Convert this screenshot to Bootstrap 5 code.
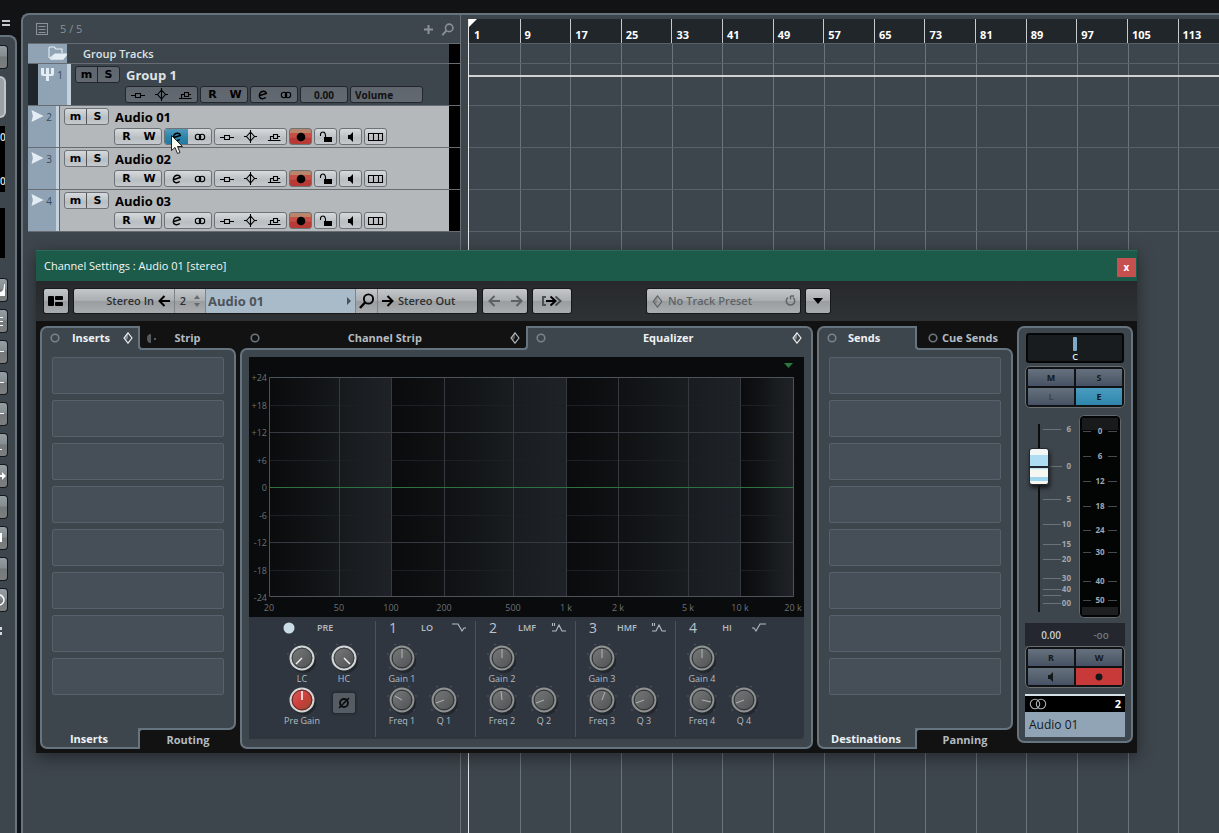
<!DOCTYPE html>
<html lang="en" data-bs-theme="dark">
<head>
<meta charset="utf-8">
<meta name="viewport" content="width=device-width, initial-scale=1">
<title>Channel Settings</title>
<link rel="stylesheet" href="https://cdn.jsdelivr.net/npm/bootstrap@5.3.0/dist/css/bootstrap.min.css">
<style>
:root{--panel:#3e464d;--edge:#667480;--line:#666c71;--track:#8fa3b5;--ink:#121314}
body{font-family:"Open Sans","Noto Sans",sans-serif;font-size:11px;line-height:14px;background:var(--ink);color:#dfe3e6;height:100vh;overflow:hidden}
button,input{font:inherit;color:inherit}
button{padding:0;border:0;background:none;display:inline-flex;align-items:center;justify-content:center}
svg{display:block;flex:none}
.ico{fill:none;stroke:currentColor;stroke-width:1.1}
.topbar{height:13px}
/* left inspector, mostly outside the view */
.inspector{width:17px;background:var(--panel);border-top:2px solid var(--edge);border-right:2px solid var(--edge);border-radius:0 8px 0 0;margin-top:4px;padding-top:8px}
.menu-mark{height:18px;width:17px;padding:6px 0 0 2px}
.side-btn{width:8px;height:24px;border:1px solid #16191c;border-left:0;border-radius:0 4px 4px 0;background:linear-gradient(#959fa3,#858d91 45%,#74787a 50%,#7d7f7f);color:#fff;overflow:hidden;justify-content:start;margin-bottom:7px}
.side-pill{width:6px;height:42px;background:#9ba2a6;border:2px solid #c0c5c8;border-left:0;border-radius:0 6px 6px 0}
.side-lcd{width:5px;background:#000;font-size:10px;color:#dce9ef;overflow:hidden;font-weight:600}
.side-stack{padding-top:20px}
/* project */
.project{background:var(--panel);border-top:2px solid var(--edge);border-left:2px solid var(--edge);border-radius:8px 0 0 0;margin-left:4px;padding-left:5px;min-width:0}
.tracklist{width:433px;border-right:1px solid #6a7074}
.list-head{height:29px;border-bottom:1px solid var(--line);color:#8b9196;padding:0 5px 0 8px}
.trk{border-bottom:1px solid var(--line);height:42px}
.trk.folder{height:20px}
.chip{background:var(--track);color:#e4edf3;flex:none}
.chip-num{color:#3b4957;font-size:10px;padding-left:3px}
.strip{width:4px;background:#c3d2de;flex:none}
.vu{width:11px;background:#000;flex:none}
.lit{background:#b4b8bb;color:#000}
.lit .strip{border-right:1px solid #5d6468}
.nm{font-size:13px;line-height:18px;font-weight:700;height:17px}
.nmrow{gap:6px}
.grp{height:17px;border:1px solid #6d7276;border-radius:3px;outline:0;background:linear-gradient(#d6dadd,#b9bec2 60%,#c6cace);color:#000;flex:none;display:flex;overflow:hidden}
.grp>*{flex:1;height:15px;min-width:0}
.grp.ms>*+*{border-left:1px solid #555}
.w45{width:45px}.w48{width:48px}.w73{width:73px}.w23{width:23px}
.gl{font-family:"DejaVu Sans",sans-serif;font-weight:700;font-size:11px;line-height:14px}
.dim .grp{border-color:#22272c;background:linear-gradient(#5f666e,#626971)}
.dim .grp>*{border-color:#22272c}
.dim .val{font-size:10px;font-weight:700;color:#111}
.on-blue{background:linear-gradient(#5599bb,#2e86ad 50%,#2479a0)}
.grp.rec{background:linear-gradient(#b9866b 25%,#c65048 30%,#c65048 55%,#b83a36 60%)}
/* timeline */
.timeline{margin-left:7px;margin-top:4px;border-left:1px solid #e4e6e7;min-width:0;overflow:hidden}
.ruler{height:24px;background:#21262b}
.ruler span,.bars span{flex:5 0 0;min-width:0;border-left:1px solid #c8cbcd;font-size:11px;font-weight:700;color:#fff;padding:9px 0 0 4px;line-height:14px}
.ruler span:last-child,.bars span:last-child{flex-grow:4}
.ruler span:first-child,.bars span:first-child{border-left-color:transparent}
.bars span{border-left-color:#6b757d;padding:0}
.lane{height:42px;border-bottom:1px solid #59626a}
.lane.first{height:21px;border-top:1px solid #59626a}
.auto{height:2px;background:#cfd1d2;margin-top:11px}
/* channel window */
.chan-win{left:36px;right:82px;top:250px;background:#121212;box-shadow:0 4px 16px rgba(0,0,0,.45)}
.titlebar{height:31px;background:#1c5b4a;border-top:1px solid #2a6c59;padding:0 1px 0 8px;font-size:11px;color:#f4f7f6}
.close-x{width:19px;height:19px;background:#c6504f;color:#fff;font-weight:700;font-size:10px;line-height:12px;margin-top:2px}
.tools{height:40px;background:linear-gradient(#27292b,#2e3235);padding:0 8px;gap:6px}
.tb{height:24px;border-radius:2px;background:linear-gradient(#c4c7ca,#abafb2 48%,#9a9ea1 52%,#a9adb0);box-shadow:0 0 0 1px #16181a;color:#2c3033;font-weight:600;font-size:11px;display:flex;align-items:center;overflow:hidden}
.tb>button,.tb>label{height:24px}
.tb>*+*{border-left:1px solid #7e8386}
.w24{width:24px}.w38{width:38px}.w44{width:44px}.w100{width:100px}
.chain{width:403px}
.chan-name{background:#a9bac9;color:#4d5359;font-size:13px;padding-left:2px}
.chan-name input{background:none;border:0;width:130px;padding:0;font-weight:700;outline:0}
.preset{width:153px;color:#5f6467}
.pnl-row{padding:5px 4px 4px;gap:4px}
.pnl{width:196px;flex:none}
.tabline{height:24px;display:flex;position:relative;z-index:1}
.tabline.up{margin-bottom:-2px}
.tabline.down{margin-top:-2px;height:21px}
.tabb{font-weight:700;font-size:11px;color:#b4bbc0;flex:none}
.tabb.act{background:var(--panel);color:#eef2f4}
.up .act{padding-bottom:2px}.down .act{padding-top:2px}.up .off{padding-top:2px}
.side .act{width:106px;padding-right:8px}
.side .off{width:90px;margin-left:-8px;background:#121212;padding-left:4px}
.side.up .act{border:solid var(--edge);border-width:2px 0 0 2px;border-radius:7px 0 0 0}
.side.up .off{border:solid var(--edge);border-width:0 0 2px 2px;border-radius:0 0 0 4px}
.side.down .act{border:solid var(--edge);border-width:0 2px 2px;border-radius:0 0 0 7px;width:100px;padding-right:2px}
.side.down .off{border:solid var(--edge);border-width:2px 0 0 2px;border-radius:4px 0 0 0;margin-left:-2px;padding-left:8px}
.mid .off{flex:1 1 0;margin-left:8px;background:#121212;border:solid var(--edge);border-width:0 2px 2px 0;border-radius:0 0 4px 0;padding-left:2px;position:relative;z-index:1}
.mid .act{flex:1 1 0;margin-left:-8px;padding-left:16px;border:solid var(--edge);border-width:2px 2px 0 0;border-radius:0 7px 0 0}
.box{background:var(--panel);border:2px solid var(--edge);border-radius:0 7px 7px 0}
.side-box{padding:7px 10px 0;height:382px;display:flex;flex-direction:column;gap:6px}
.mid-box{border-radius:7px 0 7px 7px;padding:7px 7px 8px}
.slot{height:37px;width:100%;background:#464e57;border:1px solid #56616b;border-radius:2px;flex:none}
.eq-txt{font-size:9px;fill:#6b7278}
.eq-ctl{background:#2f363f;height:122px;padding-top:4px;color:#b4bcc3;border-radius:0 0 4px 0}
.band{width:100px;padding-left:5px;border-left:1px solid #4a525b;height:116px;flex:none}
.band.pre{width:126px;padding-left:32px;border:0}
.band-head{height:14px;width:86px}
.band-no{font-size:14px;width:14px;line-height:14px;color:#b9c4cf}
.band-head .ttl{font-size:9px;font-weight:600;line-height:14px}
.knobs{display:grid;grid-template-columns:42px 42px;padding-top:8px}
.knob{flex-direction:column;width:42px;height:42px;font-size:9px;line-height:12px;white-space:nowrap}
.phase{width:22px;height:20px;background:#555c63;border-radius:2px;box-shadow:0 0 3px 1px #20252b;color:#0c0d0f}
/* channel strip */
.fcol{width:116px;flex:none;border-radius:7px;padding:5px 6px 4px;margin-bottom:2px;font-weight:600;font-size:9px}
.pan{height:30px;background:#181c1f;border:2px solid #050607;border-radius:3px;color:#dfe9f0;padding-top:2px;line-height:9px;margin:0 1px 3px;width:98px}
.quad{display:grid;grid-template-columns:1fr 1fr;gap:2px;background:#101214;border:1px solid #6a7074;border-radius:5px;padding:2px;color:#15181b}
.quad button{height:17px;background:linear-gradient(#65717f,#545f6d 60%,#465166);font-weight:700}
.quad .blue{background:linear-gradient(#4a9cc0,#2f86ac)}
.quad .red{background:#c83a3a}
.fad{height:204px;margin-top:7px}
.fad-box{left:4px;top:9px;width:20px;height:188px}
.fad-box input{position:absolute;width:188px;height:20px;left:-84px;top:84px;margin:0;transform:rotate(-90deg);appearance:none;-webkit-appearance:none;background:linear-gradient(#0000 9px,#0b0c0d 9px,#0b0c0d 11px,#0000 11px)}
.fad-box input::-webkit-slider-thumb{-webkit-appearance:none;width:37px;height:20px;border:1px solid #23282c;border-radius:3px;box-shadow:-3px 1px 4px #15181b;background:linear-gradient(90deg,#f7f7f1 3px,#9fd4ef 3px,#9fd4ef 7px,#f7f7f1 7px,#f7f7f1 14px,#aedcf3 16px,#20262b 16px,#20262b 18px,#aedcf3 18px,#aedcf3 29px,#f2f6f5 29px)}
.sc{font-size:8px;font-weight:700;fill:#a1a7ac}
.read{height:23px;background:#24272d;font-size:10px;color:#c7cdd2}
.plate{border-top:2px solid #d4e0e8;margin-top:6px}
.plate .top{height:16px;background:#000;color:#fff;font-size:11px;font-weight:700;padding:0 4px}
.plate .bot{height:25px;background:#90a4b6;color:#15191d;font-weight:400;font-size:12px;padding-left:4px}
.ptr{left:171px;top:135px;z-index:3}
</style>
<script src="https://cdn.jsdelivr.net/npm/bootstrap@5.3.0/dist/js/bootstrap.bundle.min.js" defer></script>
</head>
<body class="d-flex flex-column position-relative">
<svg width="0" height="0" class="position-absolute" aria-hidden="true">
<defs>
<linearGradient id="kg" x2="1" y2="1"><stop stop-color="#7a7c7c"/><stop offset="1" stop-color="#4c4f51"/></linearGradient>
<linearGradient id="kr" x2="1" y2="1"><stop stop-color="#d9605c"/><stop offset=".5" stop-color="#cb3f3c"/><stop offset="1" stop-color="#8c4a2a"/></linearGradient>
<linearGradient id="dec"><stop stop-color="#0a0b0d"/><stop offset=".35" stop-color="#101214"/><stop offset=".65" stop-color="#181c1f"/><stop offset="1" stop-color="#1f2228"/></linearGradient>
</defs>
<symbol id="i-ins" viewBox="0 0 14 12"><path d="M0 6.500h4.500M9.500 6.500H14M4.500 4.500h5v4h-5z"/></symbol>
<symbol id="i-eq" viewBox="0 0 13 13"><path d="M6.500 0v13M2.500 6.500l4-4.500 4 4.500-4 4.500zM0 6.500h2.500M10.500 6.500H13"/></symbol>
<symbol id="i-snd" viewBox="0 0 14 12"><path d="M1 9.500h12.500M3.500 9.500v-4h2.500M6.500 3.500h4v4h-4zM10.500 5.500H13"/></symbol>
<symbol id="i-e" viewBox="0 0 12 12"><path stroke-width="1.500" d="M2 6.700 9.300 4.500C9 2.600 6.800 1.800 5 2.500 2.900 3.400 1.900 6 2.600 8.100c.7 2 3.800 2.300 6.200.4"/></symbol>
<symbol id="i-oo" viewBox="0 0 12 12"><circle cx="4" cy="6" r="2.700"/><circle cx="8" cy="6" r="2.700"/></symbol>
<symbol id="i-rec" viewBox="0 0 10 10"><circle cx="5" cy="5" r="4.300" fill="currentColor" stroke="none"/></symbol>
<symbol id="i-lock" viewBox="0 0 14 12"><path d="M1.500 5V3Q2 1 4 1t2.500 3v3"/><path d="M5 6h8v5H5z" fill="currentColor" stroke="none"/></symbol>
<symbol id="i-spk" viewBox="0 0 8 10"><path d="M1 3h2l3-3v10L3 7H1z" fill="currentColor" stroke="none"/></symbol>
<symbol id="i-lane" viewBox="0 0 16 10"><path d="M.500 1.500h14v7H.500zM5.500 1.500v7M10.500 1.500v7"/></symbol>
<symbol id="i-aud" viewBox="0 0 14 14"><path d="M0 0 13 6.500 0 13 1.500 6.500z" fill="currentColor" stroke="none"/></symbol>
<symbol id="i-dia" viewBox="0 0 12 12"><path d="M6 .8 10 6 6 11.200 2 6z"/><path d="M6 .8 2 6l2 2.600L6 6z" fill="currentColor" fill-opacity=".4" stroke="none"/></symbol>
<symbol id="i-ring" viewBox="0 0 10 10"><circle cx="5" cy="5" r="3.800" stroke-width="1.600"/></symbol>
<symbol id="i-mag" viewBox="0 0 16 16"><circle cx="9.500" cy="6" r="4.600" stroke-width="1.900"/><path d="M6 9.500 1 15" stroke-width="2.400"/></symbol>
<symbol id="i-l" viewBox="0 0 12 12"><path stroke-width="2" d="M12 6H1.500M6.500 1l-5 5 5 5"/></symbol>
<symbol id="i-r" viewBox="0 0 12 12"><path stroke-width="2" d="M0 6h10.500M5.500 1l5 5-5 5"/></symbol>
<symbol id="k" viewBox="0 0 30 30"><g fill="#58616a"><circle cx="8" cy="1.500" r=".8"/><circle cx="22" cy="1.500" r=".8"/><circle cx="1" cy="11" r=".8"/><circle cx="29" cy="11" r=".8"/><circle cx="3" cy="25" r=".8"/><circle cx="27" cy="25" r=".8"/></g><circle cx="17" cy="18" r="12" fill="#1c2127" opacity=".7" stroke="none"/><circle cx="15" cy="15" r="11.500" fill="url(#kg)" stroke="#8f9291" stroke-width="1.800"/><circle cx="15" cy="15" r="9.800" stroke="#2e3133" stroke-width="1"/></symbol>
<symbol id="kw" viewBox="0 0 30 30"><g fill="#58616a"><circle cx="8" cy="1.500" r=".8"/><circle cx="22" cy="1.500" r=".8"/><circle cx="1" cy="11" r=".8"/><circle cx="29" cy="11" r=".8"/></g><circle cx="17" cy="18" r="12" fill="#1c2127" opacity=".7" stroke="none"/><circle cx="15" cy="15" r="11.500" fill="url(#kg)" stroke="#d3d6d6" stroke-width="2"/><circle cx="15" cy="15" r="9.800" stroke="#3c4042"/></symbol>
<symbol id="krd" viewBox="0 0 30 30"><circle cx="17" cy="18" r="12" fill="#1c2127" opacity=".7" stroke="none"/><circle cx="15" cy="15" r="11.500" fill="url(#kr)" stroke="#d3d6d6" stroke-width="2"/><circle cx="15" cy="15" r="9.800" stroke="#5c2c2a"/></symbol>
</svg>

<div class="topbar flex-shrink-0"></div>
<div class="d-flex flex-grow-1" style="min-height:0">
  <aside class="d-flex flex-column flex-shrink-0">
    <div class="menu-mark"><svg width="8" height="8" fill="#c5c8ca"><path d="M0 1h8v2H0zM0 5h8v2H0z"/></svg></div>
    <div class="inspector flex-grow-1">
      <button class="side-btn d-block" aria-label="Quick controls"></button>
      <div class="side-pill"></div>
      <div class="side-lcd mt-2 mb-2 py-1 d-flex flex-column justify-content-between" style="height:66px"><span>0</span><span>0</span></div>
      <div class="side-lcd mt-3" style="height:50px"></div>
      <div class="side-stack d-flex flex-column">
      <button class="side-btn" aria-label="Note"><svg width="7" height="12" fill="#fff"><path d="M0 8Q4 8 4 0h1v12H0z"/></svg></button>
      <button class="side-btn" aria-label="List"><svg width="7" height="12" stroke="#fff"><path d="M0 2.500h3M0 6.500h3M0 10.500h3"/></svg></button>
      <button class="side-btn" aria-label="Inserts"><svg width="7" height="12" stroke="#fff"><path d="M0 5.500h4"/></svg></button>
      <button class="side-btn" aria-label="Equalizer"><svg width="7" height="12" stroke="#fff"><path d="M0 5.500h4"/></svg></button>
      <button class="side-btn" aria-label="Sends"><svg width="7" height="12" stroke="#fff"><path d="M0 5.500h4"/></svg></button>
      <button class="side-btn" aria-label="Cue"><svg width="7" height="12" stroke="#fff"><path d="M0 10.500h2"/></svg></button>
      <button class="side-btn" aria-label="Route"><svg width="7" height="12" fill="#fff"><path d="M0 5h2V2l4 4-4 4V7H0z"/></svg></button>
      <button class="side-btn" aria-label="Strip"></button>
      <button class="side-btn" aria-label="Fader"><svg width="7" height="12" fill="#fff"><path d="M0 1h2v9H0z"/></svg></button>
      <button class="side-btn" aria-label="Notes"></button>
      <button class="side-btn" aria-label="Loop"><svg width="7" height="14" fill="none" stroke="#fff" stroke-width="1.500"><circle cx="-1" cy="7" r="5"/></svg></button>
      <svg class="mt-2" width="3" height="8" fill="#d5d9db"><path d="M0 0h2v3H0zM0 5h2v3H0z"/></svg>
      </div>
    </div>
  </aside>

  <main class="project d-flex flex-grow-1">
    <section class="tracklist flex-shrink-0" aria-label="Tracks">
      <div class="list-head d-flex align-items-center">
        <svg width="12" height="12" class="ico"><path d="M.500.500h11v11H.500zM2.500 3.500h7M2.500 6.500h7M2.500 9.500h7"/></svg>
        <span class="ms-2 me-auto ps-1">5 / 5</span>
        <button aria-label="Add track"><svg width="9" height="9" stroke="currentColor" stroke-width="2"><path d="M4.500 0v9M0 4.500h9"/></svg></button>
        <button class="ms-2" aria-label="Find track"><svg width="14" height="13" class="ico"><use href="#i-mag"/></svg></button>
      </div>

      <div class="trk folder d-flex">
        <div class="chip d-flex justify-content-end" style="width:39px"><svg width="20" height="17" viewBox="0 0 20 17" class="ico"><path d="M2 14V4q0-1 1-1h4l2 2h6v4M3 14l5-4h12l-4 5H4z"/><path d="M8 10.500h11L16 15H4z" fill="currentColor"/></svg></div>
        <div class="flex-grow-1 align-self-center fw-semibold ps-3 lh-1">Group Tracks</div>
        <div class="vu"></div>
      </div>

      <div class="trk dim d-flex">
        <div style="width:10px;background:#20242b"></div>
        <div class="chip chip-num d-flex justify-content-between pe-1 pt-1" style="width:29px"><svg width="13" height="14" fill="#e4edf3"><path d="M0 0h3v6h2V0h3v6h2V0h3v6q0 2-2 2H8v5H5V8H2Q0 8 0 6z"/></svg><span>1</span></div>
        <div class="strip"></div>
        <div class="d-flex flex-column flex-grow-1 ps-1" style="gap:3px;padding-top:2px">
          <div class="d-flex nmrow"><div class="grp ms w45 gl"><button>m</button><button>S</button></div><span class="nm">Group 1</span></div>
          <div class="d-flex" style="gap:2px;margin-left:50px">
            <div class="grp w73"><button aria-label="Inserts"><svg width="14" height="12" class="ico"><use href="#i-ins"/></svg></button><button aria-label="EQ"><svg width="13" height="13" class="ico"><use href="#i-eq"/></svg></button><button aria-label="Sends"><svg width="14" height="12" class="ico"><use href="#i-snd"/></svg></button></div>
            <div class="grp w48 gl"><button>R</button><button>W</button></div>
            <div class="grp w48"><button aria-label="Edit"><svg width="12" height="12" class="ico"><use href="#i-e"/></svg></button><button aria-label="Stereo"><svg width="12" height="12" class="ico"><use href="#i-oo"/></svg></button></div>
            <div class="grp w48"><button class="val">0.00</button></div>
            <div class="grp w73"><button class="val justify-content-start ps-1">Volume</button></div>
          </div>
        </div>
        <div class="vu"></div>
      </div>

      <div class="trk lit d-flex">
        <div class="chip chip-num d-flex justify-content-between pe-1 pt-1" style="width:28px"><svg width="14" height="13" color="#e4edf3"><use href="#i-aud"/></svg><span>2</span></div>
        <div class="strip"></div>
        <div class="d-flex flex-column flex-grow-1 ps-1" style="gap:3px;padding-top:2px">
          <div class="d-flex nmrow"><div class="grp ms w45 gl"><button>m</button><button>S</button></div><span class="nm">Audio 01</span></div>
          <div class="d-flex" style="gap:2px;margin-left:50px">
            <div class="grp w48 gl"><button>R</button><button>W</button></div>
            <div class="grp w48"><button class="on-blue" aria-label="Edit"><svg width="12" height="12" class="ico"><use href="#i-e"/></svg></button><button aria-label="Stereo"><svg width="12" height="12" class="ico"><use href="#i-oo"/></svg></button></div>
            <div class="grp w73"><button aria-label="Inserts"><svg width="14" height="12" class="ico"><use href="#i-ins"/></svg></button><button aria-label="EQ"><svg width="13" height="13" class="ico"><use href="#i-eq"/></svg></button><button aria-label="Sends"><svg width="14" height="12" class="ico"><use href="#i-snd"/></svg></button></div>
            <div class="grp rec w23"><button aria-label="Record"><svg width="10" height="10"><use href="#i-rec"/></svg></button></div>
            <div class="grp w23"><button aria-label="Lock"><svg width="14" height="12" class="ico"><use href="#i-lock"/></svg></button></div>
            <div class="grp w23"><button aria-label="Monitor"><svg width="8" height="10"><use href="#i-spk"/></svg></button></div>
            <div class="grp w23"><button aria-label="Lanes"><svg width="16" height="10" class="ico"><use href="#i-lane"/></svg></button></div>
          </div>
        </div>
        <div class="vu"></div>
      </div>

      <div class="trk lit d-flex">
        <div class="chip chip-num d-flex justify-content-between pe-1 pt-1" style="width:28px"><svg width="14" height="13" color="#e4edf3"><use href="#i-aud"/></svg><span>3</span></div>
        <div class="strip"></div>
        <div class="d-flex flex-column flex-grow-1 ps-1" style="gap:3px;padding-top:2px">
          <div class="d-flex nmrow"><div class="grp ms w45 gl"><button>m</button><button>S</button></div><span class="nm">Audio 02</span></div>
          <div class="d-flex" style="gap:2px;margin-left:50px">
            <div class="grp w48 gl"><button>R</button><button>W</button></div>
            <div class="grp w48"><button aria-label="Edit"><svg width="12" height="12" class="ico"><use href="#i-e"/></svg></button><button aria-label="Stereo"><svg width="12" height="12" class="ico"><use href="#i-oo"/></svg></button></div>
            <div class="grp w73"><button aria-label="Inserts"><svg width="14" height="12" class="ico"><use href="#i-ins"/></svg></button><button aria-label="EQ"><svg width="13" height="13" class="ico"><use href="#i-eq"/></svg></button><button aria-label="Sends"><svg width="14" height="12" class="ico"><use href="#i-snd"/></svg></button></div>
            <div class="grp rec w23"><button aria-label="Record"><svg width="10" height="10"><use href="#i-rec"/></svg></button></div>
            <div class="grp w23"><button aria-label="Lock"><svg width="14" height="12" class="ico"><use href="#i-lock"/></svg></button></div>
            <div class="grp w23"><button aria-label="Monitor"><svg width="8" height="10"><use href="#i-spk"/></svg></button></div>
            <div class="grp w23"><button aria-label="Lanes"><svg width="16" height="10" class="ico"><use href="#i-lane"/></svg></button></div>
          </div>
        </div>
        <div class="vu"></div>
      </div>

      <div class="trk lit d-flex">
        <div class="chip chip-num d-flex justify-content-between pe-1 pt-1" style="width:28px"><svg width="14" height="13" color="#e4edf3"><use href="#i-aud"/></svg><span>4</span></div>
        <div class="strip"></div>
        <div class="d-flex flex-column flex-grow-1 ps-1" style="gap:3px;padding-top:2px">
          <div class="d-flex nmrow"><div class="grp ms w45 gl"><button>m</button><button>S</button></div><span class="nm">Audio 03</span></div>
          <div class="d-flex" style="gap:2px;margin-left:50px">
            <div class="grp w48 gl"><button>R</button><button>W</button></div>
            <div class="grp w48"><button aria-label="Edit"><svg width="12" height="12" class="ico"><use href="#i-e"/></svg></button><button aria-label="Stereo"><svg width="12" height="12" class="ico"><use href="#i-oo"/></svg></button></div>
            <div class="grp w73"><button aria-label="Inserts"><svg width="14" height="12" class="ico"><use href="#i-ins"/></svg></button><button aria-label="EQ"><svg width="13" height="13" class="ico"><use href="#i-eq"/></svg></button><button aria-label="Sends"><svg width="14" height="12" class="ico"><use href="#i-snd"/></svg></button></div>
            <div class="grp rec w23"><button aria-label="Record"><svg width="10" height="10"><use href="#i-rec"/></svg></button></div>
            <div class="grp w23"><button aria-label="Lock"><svg width="14" height="12" class="ico"><use href="#i-lock"/></svg></button></div>
            <div class="grp w23"><button aria-label="Monitor"><svg width="8" height="10"><use href="#i-spk"/></svg></button></div>
            <div class="grp w23"><button aria-label="Lanes"><svg width="16" height="10" class="ico"><use href="#i-lane"/></svg></button></div>
          </div>
        </div>
        <div class="vu"></div>
      </div>
    </section>

    <section class="timeline flex-grow-1 position-relative" aria-label="Timeline">
      <div class="bars d-flex position-absolute top-0 bottom-0 start-0 end-0"><span></span><span></span><span></span><span></span><span></span><span></span><span></span><span></span><span></span><span></span><span></span><span></span><span></span><span></span><span></span></div>
      <div class="position-relative">
        <div class="ruler d-flex"><span>1</span><span>9</span><span>17</span><span>25</span><span>33</span><span>41</span><span>49</span><span>57</span><span>65</span><span>73</span><span>81</span><span>89</span><span>97</span><span>105</span><span>113</span></div>
        <svg class="position-absolute top-0 start-0" width="8" height="8" fill="#fff"><path d="M0 0h8L0 8z"/></svg>
        <div class="lane first"></div>
        <div class="lane d-flow-root overflow-hidden"><div class="auto"></div></div>
        <div class="lane"></div><div class="lane"></div><div class="lane"></div>
      </div>
    </section>
  </main>
</div>

<section class="chan-win position-absolute" aria-label="Channel Settings">
  <header class="titlebar d-flex justify-content-between align-items-center"><span>Channel Settings : Audio 01 [stereo]</span><button class="close-x" aria-label="Close">x</button></header>
  <div class="tools d-flex align-items-center">
    <div class="tb"><button class="w24" aria-label="Layout"><svg width="16" height="10" fill="#000"><rect width="6" height="10" rx="1"/><rect x="7" width="8" height="4" rx="1"/><rect x="7" y="6" width="8" height="4" rx="1"/></svg></button></div>
    <div class="tb chain">
      <button class="w100 justify-content-end pe-1 gap-1">Stereo In <svg width="12" height="12" class="ico text-black"><use href="#i-l"/></svg></button>
      <button style="width:31px" class="gap-2">2<svg width="6" height="12" fill="#666b6e"><path d="M0 4 3 0l3 4zM0 8h6l-3 4z"/></svg></button>
      <label class="chan-name d-flex align-items-center flex-grow-1"><input type="text" value="Audio 01" aria-label="Channel name"><svg class="ms-auto me-1" width="4" height="8" fill="#4a5056"><path d="M0 0l4 4-4 4z"/></svg></label>
      <button style="width:22px" aria-label="Find"><svg width="16" height="16" class="ico text-black"><use href="#i-mag"/></svg></button>
      <button class="w100 justify-content-start ps-1 gap-1"><svg width="12" height="12" class="ico text-black"><use href="#i-r"/></svg>Stereo Out</button>
    </div>
    <div class="tb"><button class="w44" aria-label="Back and forward" style="color:#5d6164;gap:11px"><svg width="12" height="12" class="ico"><use href="#i-l"/></svg><svg width="12" height="12" class="ico"><use href="#i-r"/></svg></button></div>
    <div class="tb"><button class="w38" aria-label="Output chain"><svg width="22" height="12" class="ico"><path stroke="#4b5053" stroke-width="2" d="M5 2H2v8h3M14.500 1.500l5 4.500-5 4.500"/><path stroke="#000" stroke-width="2" d="M5 6h9M9.500 1.500l5 4.500-5 4.500"/></svg></button></div>
    <div class="tb preset" style="margin-left:70px"><button class="w-100 justify-content-start px-1 gap-1"><svg width="13" height="13" class="ico"><use href="#i-dia"/></svg>No Track Preset<svg class="ms-auto" width="11" height="12" fill="none" stroke="currentColor" stroke-width="1.500"><path d="M3 2.500a4.200 4.200 0 1 0 5 0M5.500 1h3.500M5.500 1v3.500"/></svg></button></div>
    <div class="tb"><button class="w24" aria-label="Menu"><svg width="10" height="6" fill="#000"><path d="M0 0h10L5 6z"/></svg></button></div>
  </div>

  <div class="pnl-row d-flex align-items-start">
    <section class="pnl">
      <div class="tabline side up">
        <button class="tabb act justify-content-between" style="padding-left:8px"><svg width="10" height="10" class="ico" color="#77828b"><use href="#i-ring"/></svg>Inserts<svg width="12" height="12" class="ico me-1"><use href="#i-dia"/></svg></button>
        <button class="tabb off"><svg class="me-3" width="11" height="9" fill="#565b60"><path d="M4 0v9Q0 9 0 4.500T4 0zM7 4h2v2H7z"/></svg>Strip<span class="pe-4"></span></button>
      </div>
      <div class="box side-box"><button class="slot" aria-label="Insert 1"></button><button class="slot" aria-label="Insert 2"></button><button class="slot" aria-label="Insert 3"></button><button class="slot" aria-label="Insert 4"></button><button class="slot" aria-label="Insert 5"></button><button class="slot" aria-label="Insert 6"></button><button class="slot" aria-label="Insert 7"></button><button class="slot" aria-label="Insert 8"></button></div>
      <div class="tabline side down"><button class="tabb act">Inserts</button><button class="tabb off">Routing</button></div>
    </section>

    <section class="flex-grow-1">
      <div class="tabline mid up">
        <button class="tabb off justify-content-between"><svg width="10" height="10" class="ico" color="#6d757c"><use href="#i-ring"/></svg>Channel Strip<svg width="12" height="12" class="ico me-1"><use href="#i-dia"/></svg></button>
        <button class="tabb act justify-content-between"><svg width="10" height="10" class="ico" color="#77828b"><use href="#i-ring"/></svg>Equalizer<svg width="12" height="12" class="ico me-2"><use href="#i-dia"/></svg></button>
      </div>
      <div class="box mid-box">
        <svg class="w-100 h-auto" viewBox="0 0 555 260">
          <rect width="555" height="260" fill="#090b0c"/>
          <g fill="url(#dec)"><rect x="20" y="20" width="122" height="220"/><rect x="142" y="20" width="176" height="220"/><rect x="318" y="20" width="173" height="220"/><rect x="491" y="20" width="54" height="220"/></g>
          <path d="M20 48.500h525M20 103.500h525M20 158.500h525M20 213.500h525" stroke="#1c2024"/>
          <path d="M20 75.500h525M20 185.500h525M90.500 20v220M142.500 20v220M195.500 20v220M264.500 20v220M317.500 20v220M369.500 20v220M439.500 20v220M491.500 20v220" stroke="#343a40"/>
          <path d="M20.500 20.500h524v219h-524z" fill="none" stroke="#4d5459"/>
          <path d="M20 130.500h525" stroke="#2d7340"/>
          <path d="M535 6h9l-4.500 5z" fill="#2a7a3e"/>
          <g class="eq-txt" text-anchor="end"><text x="18" y="24">+24</text><text x="18" y="52">+18</text><text x="18" y="79">+12</text><text x="18" y="107">+6</text><text x="18" y="134">0</text><text x="18" y="162">-6</text><text x="18" y="189">-12</text><text x="18" y="217">-18</text><text x="18" y="244">-24</text></g>
          <g class="eq-txt" text-anchor="middle"><text x="20" y="254">20</text><text x="90" y="254">50</text><text x="142" y="254">100</text><text x="195" y="254">200</text><text x="264" y="254">500</text><text x="317" y="254">1 k</text><text x="369" y="254">2 k</text><text x="439" y="254">5 k</text><text x="491" y="254">10 k</text><text x="544" y="254">20 k</text></g>
        </svg>
        <div class="eq-ctl d-flex">
          <div class="band pre">
            <div class="band-head d-flex align-items-center"><svg width="16" height="12"><circle cx="8" cy="6" r="5.500" fill="#c9dde6"/></svg><span class="ttl ms-3 ps-1">PRE</span></div>
            <div class="knobs">
              <button class="knob"><svg width="30" height="30" fill="none"><use href="#kw"/><path d="M15 15 9 21" stroke="#eee" stroke-width="1.500"/></svg>LC</button>
              <button class="knob"><svg width="30" height="30" fill="none"><use href="#kw"/><path d="M15 15 21 21" stroke="#eee" stroke-width="1.500"/></svg>HC</button>
              <button class="knob"><svg width="30" height="30" fill="none"><use href="#krd"/><path d="M15 15V6" stroke="#fff" stroke-width="1.500"/></svg>Pre Gain</button>
              <span class="d-flex justify-content-center pt-2"><button class="phase" aria-label="Phase"><svg width="14" height="12" class="ico"><ellipse cx="7" cy="6" rx="4" ry="4" stroke-width="1.800"/><path d="M2 11 12 1" stroke-width="1.600"/></svg></button></span>
            </div>
          </div>
          <div class="band">
            <div class="band-head d-flex align-items-center justify-content-between ps-2"><span class="band-no">1</span><span class="ttl">LO</span><svg width="16" height="10" class="ico"><path d="M1 1h6l4 7 2-3h2"/></svg></div>
            <div class="knobs">
              <button class="knob"><svg width="30" height="30" fill="none"><use href="#k"/><path d="M15 15V6" stroke="#b4b6b6"/></svg>Gain 1</button><span></span>
              <button class="knob"><svg width="30" height="30" fill="none"><use href="#k"/><path d="M15 15 8 11" stroke="#b4b6b6"/></svg>Freq 1</button>
              <button class="knob"><svg width="30" height="30" fill="none"><use href="#k"/><path d="M15 15 7 18" stroke="#b4b6b6"/></svg>Q 1</button>
            </div>
          </div>
          <div class="band">
            <div class="band-head d-flex align-items-center justify-content-between ps-2"><span class="band-no">2</span><span class="ttl">LMF</span><svg width="16" height="10" class="ico"><path d="M1 8h4l3-6 3 6h4M1.500 0v3M3.500 0v3"/></svg></div>
            <div class="knobs">
              <button class="knob"><svg width="30" height="30" fill="none"><use href="#k"/><path d="M15 15V6" stroke="#b4b6b6"/></svg>Gain 2</button><span></span>
              <button class="knob"><svg width="30" height="30" fill="none"><use href="#k"/><path d="M15 15 14 6" stroke="#b4b6b6"/></svg>Freq 2</button>
              <button class="knob"><svg width="30" height="30" fill="none"><use href="#k"/><path d="M15 15 7 18" stroke="#b4b6b6"/></svg>Q 2</button>
            </div>
          </div>
          <div class="band">
            <div class="band-head d-flex align-items-center justify-content-between ps-2"><span class="band-no">3</span><span class="ttl">HMF</span><svg width="16" height="10" class="ico"><path d="M1 8h4l3-6 3 6h4M1.500 0v3M3.500 0v3"/></svg></div>
            <div class="knobs">
              <button class="knob"><svg width="30" height="30" fill="none"><use href="#k"/><path d="M15 15V6" stroke="#b4b6b6"/></svg>Gain 3</button><span></span>
              <button class="knob"><svg width="30" height="30" fill="none"><use href="#k"/><path d="M15 15 18 7" stroke="#b4b6b6"/></svg>Freq 3</button>
              <button class="knob"><svg width="30" height="30" fill="none"><use href="#k"/><path d="M15 15 7 18" stroke="#b4b6b6"/></svg>Q 3</button>
            </div>
          </div>
          <div class="band">
            <div class="band-head d-flex align-items-center justify-content-between ps-2"><span class="band-no">4</span><span class="ttl">HI</span><svg width="16" height="10" class="ico"><path d="M1 5h2l2 3 4-7h6"/></svg></div>
            <div class="knobs">
              <button class="knob"><svg width="30" height="30" fill="none"><use href="#k"/><path d="M15 15V6" stroke="#b4b6b6"/></svg>Gain 4</button><span></span>
              <button class="knob"><svg width="30" height="30" fill="none"><use href="#k"/><path d="M15 15 24 17" stroke="#b4b6b6"/></svg>Freq 4</button>
              <button class="knob"><svg width="30" height="30" fill="none"><use href="#k"/><path d="M15 15 7 18" stroke="#b4b6b6"/></svg>Q 4</button>
            </div>
          </div>
        </div>
      </div>
    </section>

    <section class="pnl">
      <div class="tabline side up">
        <button class="tabb act justify-content-between" style="padding-left:8px"><svg width="10" height="10" class="ico" color="#77828b"><use href="#i-ring"/></svg>Sends<span class="pe-4"></span></button>
        <button class="tabb off gap-1"><svg width="10" height="10" class="ico" color="#6d757c"><use href="#i-ring"/></svg>Cue Sends</button>
      </div>
      <div class="box side-box"><button class="slot" aria-label="Send 1"></button><button class="slot" aria-label="Send 2"></button><button class="slot" aria-label="Send 3"></button><button class="slot" aria-label="Send 4"></button><button class="slot" aria-label="Send 5"></button><button class="slot" aria-label="Send 6"></button><button class="slot" aria-label="Send 7"></button><button class="slot" aria-label="Send 8"></button></div>
      <div class="tabline side down"><button class="tabb act">Destinations</button><button class="tabb off">Panning</button></div>
    </section>

    <section class="box fcol">
      <div class="pan d-flex flex-column align-items-center justify-content-between"><svg width="4" height="14"><rect width="4" height="14" rx="1" fill="#7fa9c6"/></svg><span>C</span></div>
      <div class="quad"><button>M</button><button>S</button><button style="color:#3d444b">L</button><button class="blue">E</button></div>
      <div class="fad position-relative">
        <svg class="w-100 h-auto" viewBox="0 0 100 204">
          <path d="M18 14.500h18M18 51.500h19M18 84.500h18M18 109.500h18M18 129.500h18M18 144.500h18M18 163.500h18M18 174.500h18M18 180.500h18M18 188.500h18" stroke="#6b7276"/>
          <g class="sc" text-anchor="end"><text x="46" y="17">6</text><text x="46" y="54">0</text><text x="46" y="87">5</text><text x="46" y="112">10</text><text x="46" y="132">15</text><text x="46" y="147">20</text><text x="46" y="166">30</text><text x="46" y="177">40</text><text x="46" y="191">00</text></g>
          <rect x="54.500" y=".5" width="41" height="202" rx="4" fill="#030404" stroke="#62686c"/>
          <rect x="57" y="3" width="36" height="12" fill="#181a1c"/><rect x="57" y="192" width="36" height="8" fill="#1d1f21"/>
          <path d="M58 16.500h8M83 16.500h9M58 41.500h8M83 41.500h9M58 66.500h8M83 66.500h9M58 91.500h8M83 91.500h9M58 115.500h8M83 115.500h9M58 137.500h8M83 137.500h9M58 166.500h8M83 166.500h9M58 185.500h8M83 185.500h9" stroke="#43494d"/>
          <g class="sc" text-anchor="middle"><text x="75" y="19">0</text><text x="75" y="44">6</text><text x="75" y="69">12</text><text x="75" y="94">18</text><text x="75" y="118">24</text><text x="75" y="140">30</text><text x="75" y="169">40</text><text x="75" y="188">50</text></g>
        </svg>
        <div class="fad-box position-absolute"><input type="range" min="0" max="100" value="84" aria-label="Level"></div>
      </div>
      <div class="read d-flex align-items-center justify-content-around mt-1"><span>0.00</span><span class="text-secondary">-oo</span></div>
      <div class="quad"><button>R</button><button>W</button><button aria-label="Monitor"><svg width="8" height="10"><use href="#i-spk"/></svg></button><button class="red" aria-label="Record"><svg width="8" height="8"><use href="#i-rec"/></svg></button></div>
      <div class="plate">
        <div class="top d-flex justify-content-between align-items-center"><svg width="18" height="12" class="ico" color="#aab0b4"><circle cx="6" cy="6" r="4.700"/><circle cx="12" cy="6" r="4.700"/></svg>2</div>
        <div class="bot d-flex align-items-center">Audio 01</div>
      </div>
    </section>
  </div>
</section>
<svg class="ptr position-absolute" width="12" height="20" viewBox="0 0 12 20"><path d="M.5.500v15l3.500-3 2.500 6 2.500-1-2.500-6h5z" fill="#fbfbf0" stroke="#222"/></svg>
</body>
</html>
